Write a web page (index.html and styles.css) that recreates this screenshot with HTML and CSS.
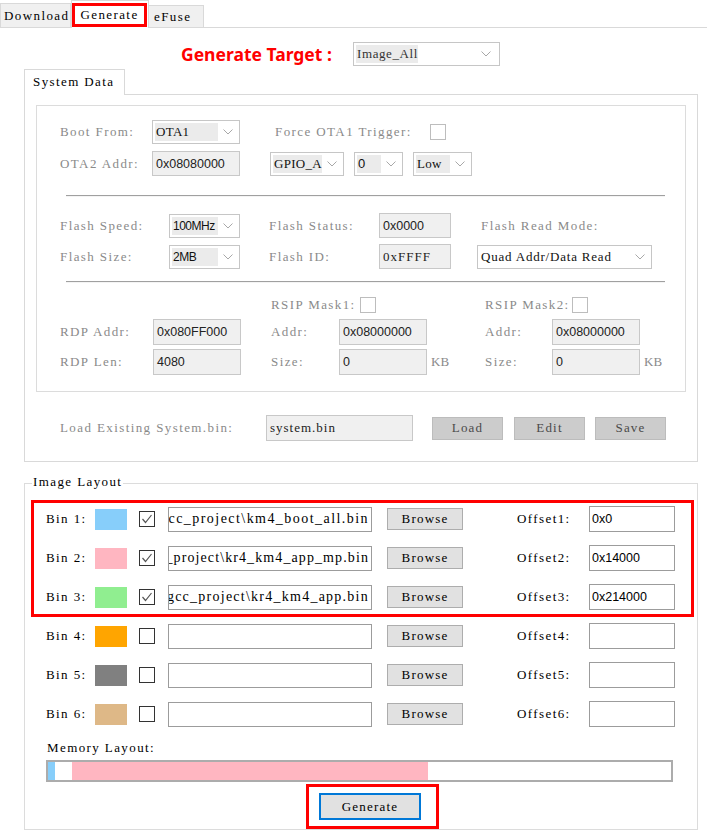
FILE: index.html
```html
<!DOCTYPE html>
<html>
<head>
<meta charset="utf-8">
<link rel="stylesheet" href="styles.css">
</head>
<body>
<div class="tabbar">
  <div class="tab tab-download">Download</div>
  <div class="tab tab-active"><span class="hl">Generate</span></div>
  <div class="tab tab-efuse">eFuse</div>
</div>

<div class="target-row">
  <span class="target-label">Generate Target :</span>
  <div class="combo w147 target-combo"><span class="cv">Image_All</span><span class="cc"><svg width="10" height="6" viewBox="0 0 10 6"><polyline points="0.5,0.5 5,5 9.5,0.5" fill="none" stroke="#a8a8a8"/></svg></span></div>
</div>

<div class="sd-tab">System Data</div>
<div class="sd-panel">
  <div class="sd-group">
    <div class="row r1">
      <span class="lbl w92">Boot From:</span>
      <div class="combo w88"><span class="cv">OTA1</span><span class="cc"><svg width="10" height="6" viewBox="0 0 10 6"><polyline points="0.5,0.5 5,5 9.5,0.5" fill="none" stroke="#a8a8a8"/></svg></span></div>
      <span class="lbl ml35 w155">Force OTA1 Trigger:</span>
      <span class="chk"></span>
    </div>
    <div class="row r2">
      <span class="lbl w92">OTA2 Addr:</span>
      <div class="tb w88 h25">0x08080000</div>
      <div class="combo w74 ml30"><span class="cv">GPIO_A</span><span class="cc"><svg width="10" height="6" viewBox="0 0 10 6"><polyline points="0.5,0.5 5,5 9.5,0.5" fill="none" stroke="#a8a8a8"/></svg></span></div>
      <div class="combo w49 ml10"><span class="cv sans">0</span><span class="cc"><svg width="10" height="6" viewBox="0 0 10 6"><polyline points="0.5,0.5 5,5 9.5,0.5" fill="none" stroke="#a8a8a8"/></svg></span></div>
      <div class="combo w59 ml10"><span class="cv">Low</span><span class="cc"><svg width="10" height="6" viewBox="0 0 10 6"><polyline points="0.5,0.5 5,5 9.5,0.5" fill="none" stroke="#a8a8a8"/></svg></span></div>
    </div>
    <div class="sep sep1"></div>
    <div class="row r3">
      <span class="lbl w109">Flash Speed:</span>
      <div class="combo w71"><span class="cv narrow">100MHz</span><span class="cc"><svg width="10" height="6" viewBox="0 0 10 6"><polyline points="0.5,0.5 5,5 9.5,0.5" fill="none" stroke="#a8a8a8"/></svg></span></div>
      <span class="lbl ml29 w110">Flash Status:</span>
      <div class="tb w72 h25">0x0000</div>
      <span class="lbl ml30">Flash Read Mode:</span>
    </div>
    <div class="row r4">
      <span class="lbl w109">Flash Size:</span>
      <div class="combo w71"><span class="cv narrow">2MB</span><span class="cc"><svg width="10" height="6" viewBox="0 0 10 6"><polyline points="0.5,0.5 5,5 9.5,0.5" fill="none" stroke="#a8a8a8"/></svg></span></div>
      <span class="lbl ml29 w110">Flash ID:</span>
      <div class="tb w72 h25 serif">0xFFFF</div>
      <div class="combo w175 ml26 plain"><span class="cv">Quad Addr/Data Read</span><span class="cc"><svg width="10" height="6" viewBox="0 0 10 6"><polyline points="0.5,0.5 5,5 9.5,0.5" fill="none" stroke="#a8a8a8"/></svg></span></div>
    </div>
    <div class="sep sep2"></div>
    <div class="row r5">
      <span class="lbl ml211 w89">RSIP Mask1:</span>
      <span class="chk"></span>
      <span class="lbl ml109 w87">RSIP Mask2:</span>
      <span class="chk"></span>
    </div>
    <div class="row r6">
      <span class="lbl w93">RDP Addr:</span>
      <div class="tb w88 h26">0x080FF000</div>
      <span class="lbl ml30 w68">Addr:</span>
      <div class="tb w88 h26">0x08000000</div>
      <span class="lbl ml58 w67">Addr:</span>
      <div class="tb w88 h26">0x08000000</div>
    </div>
    <div class="row r7">
      <span class="lbl w93">RDP Len:</span>
      <div class="tb w88 h26">4080</div>
      <span class="lbl ml30 w68">Size:</span>
      <div class="tb w88 h26">0</div>
      <span class="lbl kb ml4 w27">KB</span>
      <span class="lbl ml27 w67">Size:</span>
      <div class="tb w88 h26">0</div>
      <span class="lbl kb ml4">KB</span>
    </div>
  </div>
  <div class="row load-row">
    <span class="lbl w206">Load Existing System.bin:</span>
    <div class="tb w147 h26 serif">system.bin</div>
    <button class="btn btn-gray ml19">Load</button>
    <button class="btn btn-gray ml11">Edit</button>
    <button class="btn btn-gray ml10">Save</button>
  </div>
</div>

<div class="img-group">
  <span class="legend">Image Layout</span>
  <div class="bins bins-hl">
    <div class="bin-row">
      <span class="bin-lbl">Bin 1:</span>
      <span class="swatch c1"></span>
      <span class="chk chk-en"><svg width="14" height="14" viewBox="0 0 14 14"><polyline points="2.5,7 5.5,10.5 11.5,3" fill="none" stroke="#555" stroke-width="1.2"/></svg></span>
      <div class="path p1"><span>gcc_project\km4_boot_all.bin</span></div>
      <button class="btn btn-browse">Browse</button>
      <span class="off-lbl">Offset1:</span>
      <div class="off-tb">0x0</div>
    </div>
    <div class="bin-row">
      <span class="bin-lbl">Bin 2:</span>
      <span class="swatch c2"></span>
      <span class="chk chk-en"><svg width="14" height="14" viewBox="0 0 14 14"><polyline points="2.5,7 5.5,10.5 11.5,3" fill="none" stroke="#555" stroke-width="1.2"/></svg></span>
      <div class="path p2"><span>gcc_project\kr4_km4_app_mp.bin</span></div>
      <button class="btn btn-browse">Browse</button>
      <span class="off-lbl">Offset2:</span>
      <div class="off-tb">0x14000</div>
    </div>
    <div class="bin-row">
      <span class="bin-lbl">Bin 3:</span>
      <span class="swatch c3"></span>
      <span class="chk chk-en"><svg width="14" height="14" viewBox="0 0 14 14"><polyline points="2.5,7 5.5,10.5 11.5,3" fill="none" stroke="#555" stroke-width="1.2"/></svg></span>
      <div class="path p3"><span>gcc_project\kr4_km4_app.bin</span></div>
      <button class="btn btn-browse">Browse</button>
      <span class="off-lbl">Offset3:</span>
      <div class="off-tb">0x214000</div>
    </div>
  </div>
  <div class="bins bins-rest">
    <div class="bin-row">
      <span class="bin-lbl">Bin 4:</span>
      <span class="swatch c4"></span>
      <span class="chk chk-en"></span>
      <div class="path"></div>
      <button class="btn btn-browse">Browse</button>
      <span class="off-lbl">Offset4:</span>
      <div class="off-tb"></div>
    </div>
    <div class="bin-row">
      <span class="bin-lbl">Bin 5:</span>
      <span class="swatch c5"></span>
      <span class="chk chk-en"></span>
      <div class="path"></div>
      <button class="btn btn-browse">Browse</button>
      <span class="off-lbl">Offset5:</span>
      <div class="off-tb"></div>
    </div>
    <div class="bin-row">
      <span class="bin-lbl">Bin 6:</span>
      <span class="swatch c6"></span>
      <span class="chk chk-en"></span>
      <div class="path"></div>
      <button class="btn btn-browse">Browse</button>
      <span class="off-lbl">Offset6:</span>
      <div class="off-tb"></div>
    </div>
  </div>
  <div class="mem-lbl">Memory Layout:</div>
  <div class="mem-bar">
    <span class="seg c1" style="width:7px"></span>
    <span class="seg" style="width:17px"></span>
    <span class="seg c2" style="width:356px"></span>
  </div>
  <div class="gen-hl">
    <button class="btn gen-btn">Generate</button>
  </div>
</div>
</body>
</html>
```

FILE: styles.css
```css
* { box-sizing: border-box; }
html, body { margin: 0; padding: 0; }
body {
  width: 707px;
  height: 837px;
  overflow: hidden;
  background: #fff;
  font-family: "Liberation Serif", "DejaVu Serif", serif;
  font-size: 13px;
  letter-spacing: 1.4px;
  color: #000;
}

/* top tab strip */
.tabbar {
  display: flex;
  align-items: flex-end;
  height: 28px;
  border-bottom: 1px solid #d9d9d9;
}
.tab {
  background: #f0f0f0;
  border: 1px solid #d9d9d9;
  border-bottom: none;
  display: flex;
  align-items: center;
}
.tab-download { width: 71px; height: 24px; padding-left: 3px; }
.tab-active {
  width: 78px;
  height: 28px;
  margin-bottom: -1px;
  background: #fff;
  align-items: flex-start;
  padding-top: 2px;
}
.hl {
  width: 75px;
  height: 24px;
  border: 3px solid #ff0000;
  display: flex;
  align-items: center;
  justify-content: center;
}
.tab-efuse { width: 55px; height: 22px; padding-left: 5px; border-left: none; }

/* target row */
.target-row {
  display: flex;
  align-items: center;
  height: 24px;
  margin-top: 14px;
  padding-left: 181px;
}
.target-label {
  width: 172px;
  font-family: "Noto Sans", "Liberation Sans", sans-serif;
  font-weight: bold;
  font-size: 17.5px;
  letter-spacing: 0;
  color: #ff0000;
  white-space: nowrap;
}
.target-combo { height: 24px; }
.target-combo .cv { color: #333; flex: 0 0 56px; overflow: visible; letter-spacing: 0.6px; }
.target-combo .cc { flex: 1; justify-content: flex-end; padding-right: 6px; }

/* system data */
.sd-tab {
  position: relative;
  z-index: 1;
  margin: 3px 0 -1px 24px;
  width: 101px;
  height: 26px;
  background: #fff;
  border: 1px solid #d9d9d9;
  border-bottom: none;
  padding-left: 8px;
  line-height: 24px;
}
.sd-panel {
  margin-left: 24px;
  width: 674px;
  height: 368px;
  border: 1px solid #d9d9d9;
  padding: 10px 11px 0;
}
.sd-group {
  width: 650px;
  height: 287px;
  border: 1px solid #dcdcdc;
  padding: 14px 0 0 23px;
}
.row { display: flex; align-items: center; }
.r1 { height: 24px; }
.r2 { height: 25px; margin-top: 7px; }
.r3 { height: 25px; margin-top: 16px; }
.r4 { height: 25px; margin-top: 6px; }
.r5 { height: 16px; margin-top: 14px; }
.r6 { height: 26px; margin-top: 6px; }
.r7 { height: 26px; margin-top: 4px; }
.sep {
  margin-left: 6px;
  width: 599px;
  border-top: 1px solid #a0a0a0;
  border-bottom: 1px solid #f4f4f4;
}
.sep1 { margin-top: 19px; }
.sep2 { margin-top: 12px; }

.lbl { color: #8a8a8a; white-space: nowrap; flex: none; }
.kb { letter-spacing: 0; }

.w27 { width: 27px; } .w49 { width: 49px; } .w59 { width: 59px; }
.w67 { width: 67px; } .w68 { width: 68px; } .w71 { width: 71px; }
.w72 { width: 72px; } .w74 { width: 74px; } .w87 { width: 87px; }
.w88 { width: 88px; } .w89 { width: 89px; } .w92 { width: 92px; }
.w93 { width: 93px; } .w109 { width: 109px; } .w110 { width: 110px; }
.w147 { width: 147px; } .w155 { width: 155px; } .w175 { width: 175px; }
.w206 { width: 206px; }
.h25 { height: 25px; } .h26 { height: 26px; }
.ml4 { margin-left: 4px; } .ml10 { margin-left: 10px; } .ml11 { margin-left: 11px; }
.ml19 { margin-left: 19px; } .ml26 { margin-left: 26px; } .ml27 { margin-left: 27px; }
.ml29 { margin-left: 29px; } .ml30 { margin-left: 30px; } .ml35 { margin-left: 35px; }
.ml58 { margin-left: 58px; } .ml109 { margin-left: 109px; } .ml211 { margin-left: 211px; }

.combo {
  flex: none;
  display: flex;
  height: 24px;
  border: 1px solid #c6c6c6;
  background: #fff;
  padding: 2px;
}
.cv {
  flex: 1;
  display: flex;
  align-items: center;
  background: #ebebeb;
  padding-left: 1px;
  white-space: nowrap;
  overflow: hidden;
  color: #111;
  letter-spacing: 0.3px;
}
.cv.narrow {
  font-family: "Liberation Sans", sans-serif;
  font-size: 12px;
  letter-spacing: -0.5px;
}
.cv.sans { font-family: "Liberation Sans", sans-serif; letter-spacing: 0; }
.plain .cv { background: #fff; letter-spacing: 0.8px; }
.cc {
  flex: 0 0 19px;
  display: flex;
  align-items: center;
  justify-content: center;
}

.tb {
  flex: none;
  display: flex;
  align-items: center;
  border: 1px solid #c8c8c8;
  background: #f0f0f0;
  padding-left: 3px;
  font-family: "Liberation Sans", sans-serif;
  font-size: 12.5px;
  letter-spacing: 0;
  color: #222;
  white-space: nowrap;
}
.tb.serif {
  font-family: "Liberation Serif", serif;
  font-size: 13px;
  letter-spacing: 1px;
}

.chk {
  flex: none;
  width: 16px;
  height: 16px;
  border: 1px solid #bdbdbd;
  background: #fff;
  display: flex;
  align-items: center;
  justify-content: center;
}
.chk-en { border-color: #333; }

.load-row { height: 26px; margin: 23px 0 0 24px; }

.btn {
  flex: none;
  font-family: "Liberation Serif", serif;
  font-size: 13px;
  letter-spacing: 1.2px;
  padding: 0;
  margin-top: 0;
  margin-bottom: 0;
  margin-right: 0;
}
.btn-gray {
  width: 71px;
  height: 23px;
  background: #cccccc;
  border: 1px solid #bcbcbc;
  color: #4a4a4a;
}

/* image layout */
.img-group {
  position: relative;
  margin: 21px 0 0 24px;
  width: 674px;
  height: 347px;
  border: 1px solid #dcdcdc;
}
.legend {
  position: absolute;
  left: 7px;
  top: -10px;
  padding: 0 1px;
  background: #fff;
  line-height: 15px;
}
.bins {
  margin-left: 6px;
  width: 663px;
  display: flex;
  flex-direction: column;
  gap: 13px;
}
.bins-hl {
  margin-top: 16px;
  height: 117px;
  border: 3px solid #ff0000;
  padding-top: 3px;
  padding-left: 12px;
}
.bins-rest { margin-top: 6px; padding-left: 15px; }
.bin-row { display: flex; align-items: center; height: 26px; }
.bin-lbl { width: 49px; flex: none; white-space: nowrap; }
.swatch { flex: none; width: 32px; height: 21px; }
.c1 { background: #87cefa; }
.c2 { background: #ffb6c1; }
.c3 { background: #90ee90; }
.c4 { background: #ffa500; }
.c5 { background: #808080; }
.c6 { background: #deb887; }
.bin-row .chk { margin-left: 12px; }
.path {
  flex: none;
  margin-left: 13px;
  width: 204px;
  height: 25px;
  border: 1px solid #9c9c9c;
  background: #fff;
  display: flex;
  align-items: center;
  justify-content: flex-end;
  overflow: hidden;
  white-space: nowrap;
  padding-right: 2px;
  font-size: 14px;
  letter-spacing: 1.1px;
}
.path.p1 { letter-spacing: 1.45px; }
.path.p2 { letter-spacing: 1.1px; }
.path.p3 { letter-spacing: 1.25px; }
.path span { flex: none; }
.btn-browse {
  margin-left: 15px;
  width: 76px;
  height: 22px;
  background: #e1e1e1;
  border: 1px solid #adadad;
  color: #000;
}
.off-lbl { margin-left: 54px; width: 72px; flex: none; white-space: nowrap; }
.off-tb {
  flex: none;
  width: 86px;
  height: 26px;
  border: 1px solid #9c9c9c;
  background: #fff;
  display: flex;
  align-items: center;
  padding-left: 2px;
  font-family: "Liberation Sans", sans-serif;
  font-size: 12.5px;
  letter-spacing: 0;
}
.mem-lbl { margin: 15px 0 0 22px; line-height: 12px; height: 12px; }
.mem-bar {
  display: flex;
  margin: 6px 0 0 21px;
  width: 627px;
  height: 22px;
  border: 2px solid #acacac;
  background: #fff;
}
.seg { flex: none; height: 100%; }
.gen-hl {
  margin: 2px 0 0 281px;
  width: 133px;
  height: 45px;
  border: 3px solid #ff0000;
  padding: 6px 0 0 10px;
}
.gen-btn {
  display: block;
  width: 102px;
  height: 27px;
  background: #e1e1e1;
  border: 2px solid #0078d7;
  color: #000;
}
```
